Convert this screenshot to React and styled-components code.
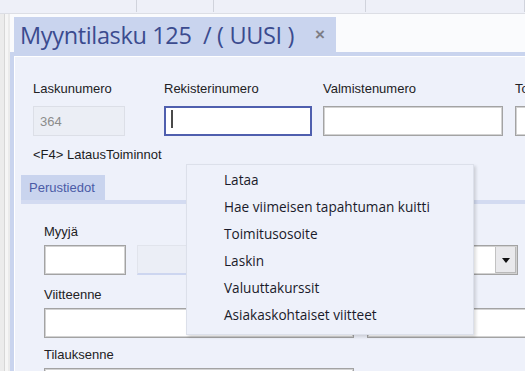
import styled, { createGlobalStyle } from "styled-components";

const GlobalStyle = createGlobalStyle`
  html, body {
    margin: 0;
    padding: 0;
    overflow: hidden;
    background: #f7f8fb;
  }
  * { box-sizing: border-box; }
`;

const menuItems = [
  "Lataa",
  "Hae viimeisen tapahtuman kuitti",
  "Toimitusosoite",
  "Laskin",
  "Valuuttakurssit",
  "Asiakaskohtaiset viitteet",
];

export default function App() {
  return (
    <>
      <GlobalStyle />
      <Screen>
        <TopBar>
          <TopCell $w={137} />
          <TopCell $w={77} />
          <TopCell $w={152} />
          <TopCell />
        </TopBar>
        <Body>
          <Rail />
          <Doc>
            <TabStrip>
              <DocTab>
                <DocTitle>Myyntilasku 125  / ( UUSI )</DocTitle>
                <Close>×</Close>
              </DocTab>
            </TabStrip>
            <Panel>
              <Header>
                <FieldRow>
                  <Field $w={92} $mr={39}>
                    <Label $mb={10}>Laskunumero</Label>
                    <Input $variant="disabled">364</Input>
                  </Field>
                  <Field $w={148} $mr={11}>
                    <Label $mb={10}>Rekisterinumero</Label>
                    <Input $variant="focus">
                      <Caret />
                    </Input>
                  </Field>
                  <Field $w={180} $mr={12}>
                    <Label $mb={10}>Valmistenumero</Label>
                    <Input />
                  </Field>
                  <Field $w={150}>
                    <Label $mb={10}>Toimitustapa</Label>
                    <Input />
                  </Field>
                </FieldRow>
                <Hint>&lt;F4&gt; LatausToiminnot</Hint>
              </Header>

              <SubTabs>
                <SubTab>Perustiedot</SubTab>
              </SubTabs>
              <SubPanel>
                <FieldRow>
                  <Field $w={82} $mr={11}>
                    <Label>Myyjä</Label>
                    <Input />
                  </Field>
                  <Field $w={193} $mr={10}>
                    <Label>&nbsp;</Label>
                    <Input $variant="readonly" />
                  </Field>
                  <Field $w={178}>
                    <Label>Maksuehto</Label>
                    <Input>
                      <DropButton />
                    </Input>
                  </Field>
                </FieldRow>
                <FieldRow $mt={12}>
                  <Field $w={310} $mr={13}>
                    <Label>Viitteenne</Label>
                    <Input />
                  </Field>
                  <Field $w={200}>
                    <Label>&nbsp;</Label>
                    <Input />
                  </Field>
                </FieldRow>
                <FieldRow $mt={9}>
                  <Field $w={310}>
                    <Label>Tilauksenne</Label>
                    <Input />
                  </Field>
                </FieldRow>
              </SubPanel>
            </Panel>
          </Doc>
        </Body>

        <Menu>
          {menuItems.map((item) => (
            <MenuItem key={item}>{item}</MenuItem>
          ))}
        </Menu>
      </Screen>
    </>
  );
}

const Screen = styled.div`
  position: relative;
  width: 525px;
  height: 371px;
  overflow: hidden;
  display: flex;
  flex-direction: column;
  font-family: "Liberation Sans", Arial, sans-serif;
  background: #f7f8fb;
`;

const TopBar = styled.div`
  height: 14px;
  flex-shrink: 0;
  display: flex;
  background: #eef0f8;
  border-bottom: 1px solid #dcdee5;
`;

const TopCell = styled.div`
  width: ${(p) => (p.$w ? `${p.$w}px` : "auto")};
  flex: ${(p) => (p.$w ? "0 0 auto" : "1")};
  border-right: 1px solid #d0d3dc;
  height: 12px;
`;

const Body = styled.div`
  flex: 1;
  min-height: 0;
  display: flex;
`;

const Rail = styled.div`
  width: 10px;
  flex-shrink: 0;
  background: linear-gradient(
    to right,
    #ececec 0 4px,
    #d7d7d7 4px 5px,
    #f6f6f6 5px 8px,
    #ebebeb 8px 10px
  );
`;

const Doc = styled.div`
  flex: 1;
  min-width: 0;
  display: flex;
  flex-direction: column;
  background: #fafbfd;
`;

const TabStrip = styled.div`
  height: 38px;
  flex-shrink: 0;
  padding: 3px 0 0 4px;
  display: flex;
`;

const DocTab = styled.div`
  width: 322px;
  height: 35px;
  background: #c9d4ee;
  display: flex;
  align-items: center;
  justify-content: space-between;
  padding: 0 11px 0 6px;
`;

const DocTitle = styled.span`
  font-family: "Open Sans", "Noto Sans", sans-serif;
  font-size: 23.5px;
  letter-spacing: -0.35px;
  color: #3b4b8f;
  white-space: pre;
`;

const Close = styled.span`
  font-size: 17px;
  font-weight: bold;
  color: #7d7d85;
  line-height: 1;
`;

const Panel = styled.div`
  flex: 1;
  min-height: 0;
  border-top: 4px solid #c9d4ee;
  border-left: 4px solid #c9d4ee;
  background: #eef1fa;
  box-shadow: inset 1px 1px 0 #ffffff;
  padding: 25px 0 0 7px;
`;

const Header = styled.div`
  padding-left: 12px;
`;

const FieldRow = styled.div`
  display: flex;
  align-items: flex-start;
  margin-top: ${(p) => p.$mt || 0}px;
`;

const Field = styled.div`
  width: ${(p) => p.$w}px;
  margin-right: ${(p) => p.$mr || 0}px;
  flex-shrink: 0;
`;

const Label = styled.div`
  font-size: 13px;
  line-height: 15px;
  color: #222224;
  white-space: nowrap;
  margin-bottom: ${(p) => (p.$mb !== undefined ? p.$mb : 6)}px;
`;

const inputLook = {
  default: `
    background: #ffffff;
    border: 1px solid #a3a3a3;
    box-shadow: inset 0 0 0 1px #d2d2d2;
  `,
  disabled: `
    background: #ebeef5;
    border: 1px solid #dcdfe7;
    color: #8c8c8c;
  `,
  focus: `
    background: #ffffff;
    border: 2px solid #4f5fae;
    padding-left: 5px;
  `,
  readonly: `
    background: #ebeef6;
    border: 1px solid #e1e4ec;
    border-bottom: 2px solid #cdd6f0;
  `,
};

const Input = styled.div`
  position: relative;
  height: 30px;
  display: flex;
  align-items: center;
  padding-left: 6px;
  font-size: 13px;
  ${(p) => inputLook[p.$variant || "default"]}
`;

const Caret = styled.span`
  width: 2px;
  height: 18px;
  margin-bottom: 4px;
  background: #4a4a4a;
`;

const DropButton = styled.span`
  margin-left: auto;
  margin-right: 1px;
  width: 21px;
  height: 26px;
  background: #e9e9ec;
  border-left: 1px solid #c2c2c2;
  box-shadow: inset -1px -1px 0 #b9b9b9;
  display: flex;
  align-items: center;
  justify-content: center;

  &::after {
    content: "";
    border-left: 4px solid transparent;
    border-right: 4px solid transparent;
    border-top: 5px solid #111;
  }
`;

const Hint = styled.div`
  margin-top: 11px;
  font-size: 13px;
  line-height: 15px;
  color: #1c1c1e;
`;

const SubTabs = styled.div`
  margin-top: 13px;
  display: flex;
`;

const SubTab = styled.div`
  width: 84px;
  height: 25px;
  background: #c9d4ee;
  color: #4b5ba6;
  font-size: 13px;
  display: flex;
  align-items: center;
  padding-left: 8px;
`;

const SubPanel = styled.div`
  border-top: 4px solid #d3dbf1;
  padding: 20px 0 0 23px;
`;

const Menu = styled.div`
  position: absolute;
  left: 186px;
  top: 164px;
  width: 288px;
  padding: 2px 0 5px;
  background: #eef1fa;
  border: 1px solid #dce0ea;
  box-shadow: 2px 2px 3px rgba(0, 0, 0, 0.14);
`;

const MenuItem = styled.div`
  height: 27px;
  line-height: 26px;
  padding-left: 37px;
  font-family: "Open Sans", "Noto Sans", sans-serif;
  font-size: 13.6px;
  color: #1a1b2a;
  white-space: nowrap;
`;
